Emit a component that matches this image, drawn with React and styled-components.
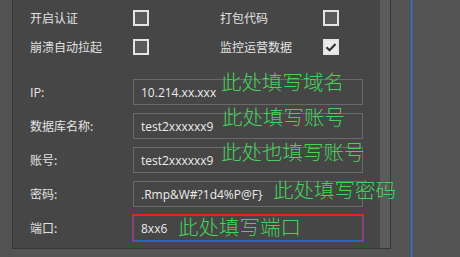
import React from "react";
import styled, { createGlobalStyle } from "styled-components";

const Global = createGlobalStyle`
  html, body { margin: 0; padding: 0; background: #545454; overflow: hidden; }
  #root { width: 460px; height: 257px; }
`;

const Screen = styled.div`
  display: flex;
  width: 460px;
  height: 257px;
  background: #545454;
  font-family: "Segoe UI", "Open Sans", "Noto Sans CJK SC", sans-serif;
`;

const LeftStrip = styled.div`
  width: 12px;
  flex: none;
  background: #525252;
`;

const Panel = styled.div`
  width: 377px;
  height: 248px;
  flex: none;
  display: flex;
  background: #464646;
  border-left: 1px solid #3a3a3a;
  border-right: 1px solid #363636;
  border-bottom: 1px solid #363636;
`;

const Content = styled.div`
  width: 367px;
  padding: 10px 0 0 17px;
  box-sizing: border-box;
  display: flex;
  flex-direction: column;
`;

const ScrollTrack = styled.div`
  width: 10px;
  background: #5b5b5b;
`;

const Gutter = styled.div`
  width: 20px;
  flex: none;
`;

const BlueLine = styled.div`
  width: 1px;
  flex: none;
  background: #2379e0;
  box-shadow: 0.5px 0 0 rgba(35, 121, 224, 0.5);
`;

const CheckGrid = styled.div`
  display: grid;
  grid-template-columns: 103px 87px 103px 16px;
  grid-auto-rows: 16px;
  row-gap: 13px;
  align-items: center;
`;

const Label = styled.span`
  font-size: 12px;
  color: #e2e2e2;
  font-family: "Noto Sans CJK SC", "Segoe UI", sans-serif;
  white-space: nowrap;
  line-height: 16px;
`;

const Box = styled.div`
  width: 16px;
  height: 16px;
  box-sizing: border-box;
  border: 2px solid #e4e4e4;
  background: ${(p) => (p.$checked ? "#ececec" : "#5a5a5a")};
  display: flex;
  align-items: center;
  justify-content: center;
`;

const Fields = styled.div`
  display: flex;
  flex-direction: column;
  gap: 8px;
  margin-top: 24px;
`;

const FieldRow = styled.div`
  position: relative;
  display: grid;
  grid-template-columns: 103px 230px;
  align-items: center;
  height: 26px;
`;

const Input = styled.div`
  height: 26px;
  box-sizing: border-box;
  border: 1px solid ${(p) => (p.$focused ? "#2a62c9" : "#6a6a6a")};
  outline: ${(p) => (p.$marked ? "1px solid #ee1c24" : "none")};
  padding-left: 7px;
  display: flex;
  align-items: center;
  font-family: "Segoe UI", "Open Sans", sans-serif;
  font-size: 12px;
  color: #ececec;
  white-space: nowrap;
  overflow: hidden;
`;

const Note = styled.span`
  position: absolute;
  left: ${(p) => p.$left}px;
  top: ${(p) => p.$top}px;
  font-family: "Noto Sans CJK SC", sans-serif;
  font-size: 20.5px;
  line-height: 22px;
  font-weight: 300;
  color: #45d25b;
  white-space: nowrap;
  pointer-events: none;
`;

const Check = () => (
  <svg width="12" height="12" viewBox="0 0 12 12">
    <path d="M1.5 6.2 L4.6 9.2 L10.5 3" fill="none" stroke="#333" strokeWidth="2.2" />
  </svg>
);

const fields = [
  { label: "IP:", value: "10.214.xx.xxx", note: "此处填写域名", left: 191, top: -9 },
  { label: "数据库名称:", value: "test2xxxxxx9", note: "此处填写账号", left: 192, top: -8 },
  { label: "账号:", value: "test2xxxxxx9", note: "此处也填写账号", left: 191, top: -7 },
  { label: "密码:", value: ".Rmp&W#?1d4%P@F}", note: "此处填写密码", left: 243, top: -3 },
  { label: "端口:", value: "8xx6", note: "此处填写端口", left: 148, top: 0, focused: true },
];

export default function App() {
  return (
    <>
      <Global />
      <Screen>
        <LeftStrip />
        <Panel>
          <Content>
            <CheckGrid>
              <Label>开启认证</Label>
              <Box />
              <Label>打包代码</Label>
              <Box />
              <Label>崩溃自动拉起</Label>
              <Box />
              <Label>监控运营数据</Label>
              <Box $checked>
                <Check />
              </Box>
            </CheckGrid>
            <Fields>
              {fields.map((f) => (
                <FieldRow key={f.label}>
                  <Label>{f.label}</Label>
                  <Input $focused={f.focused} $marked={f.focused}>
                    {f.value}
                  </Input>
                  <Note $left={f.left} $top={f.top}>
                    {f.note}
                  </Note>
                </FieldRow>
              ))}
            </Fields>
          </Content>
          <ScrollTrack />
        </Panel>
        <Gutter />
        <BlueLine />
      </Screen>
    </>
  );
}
